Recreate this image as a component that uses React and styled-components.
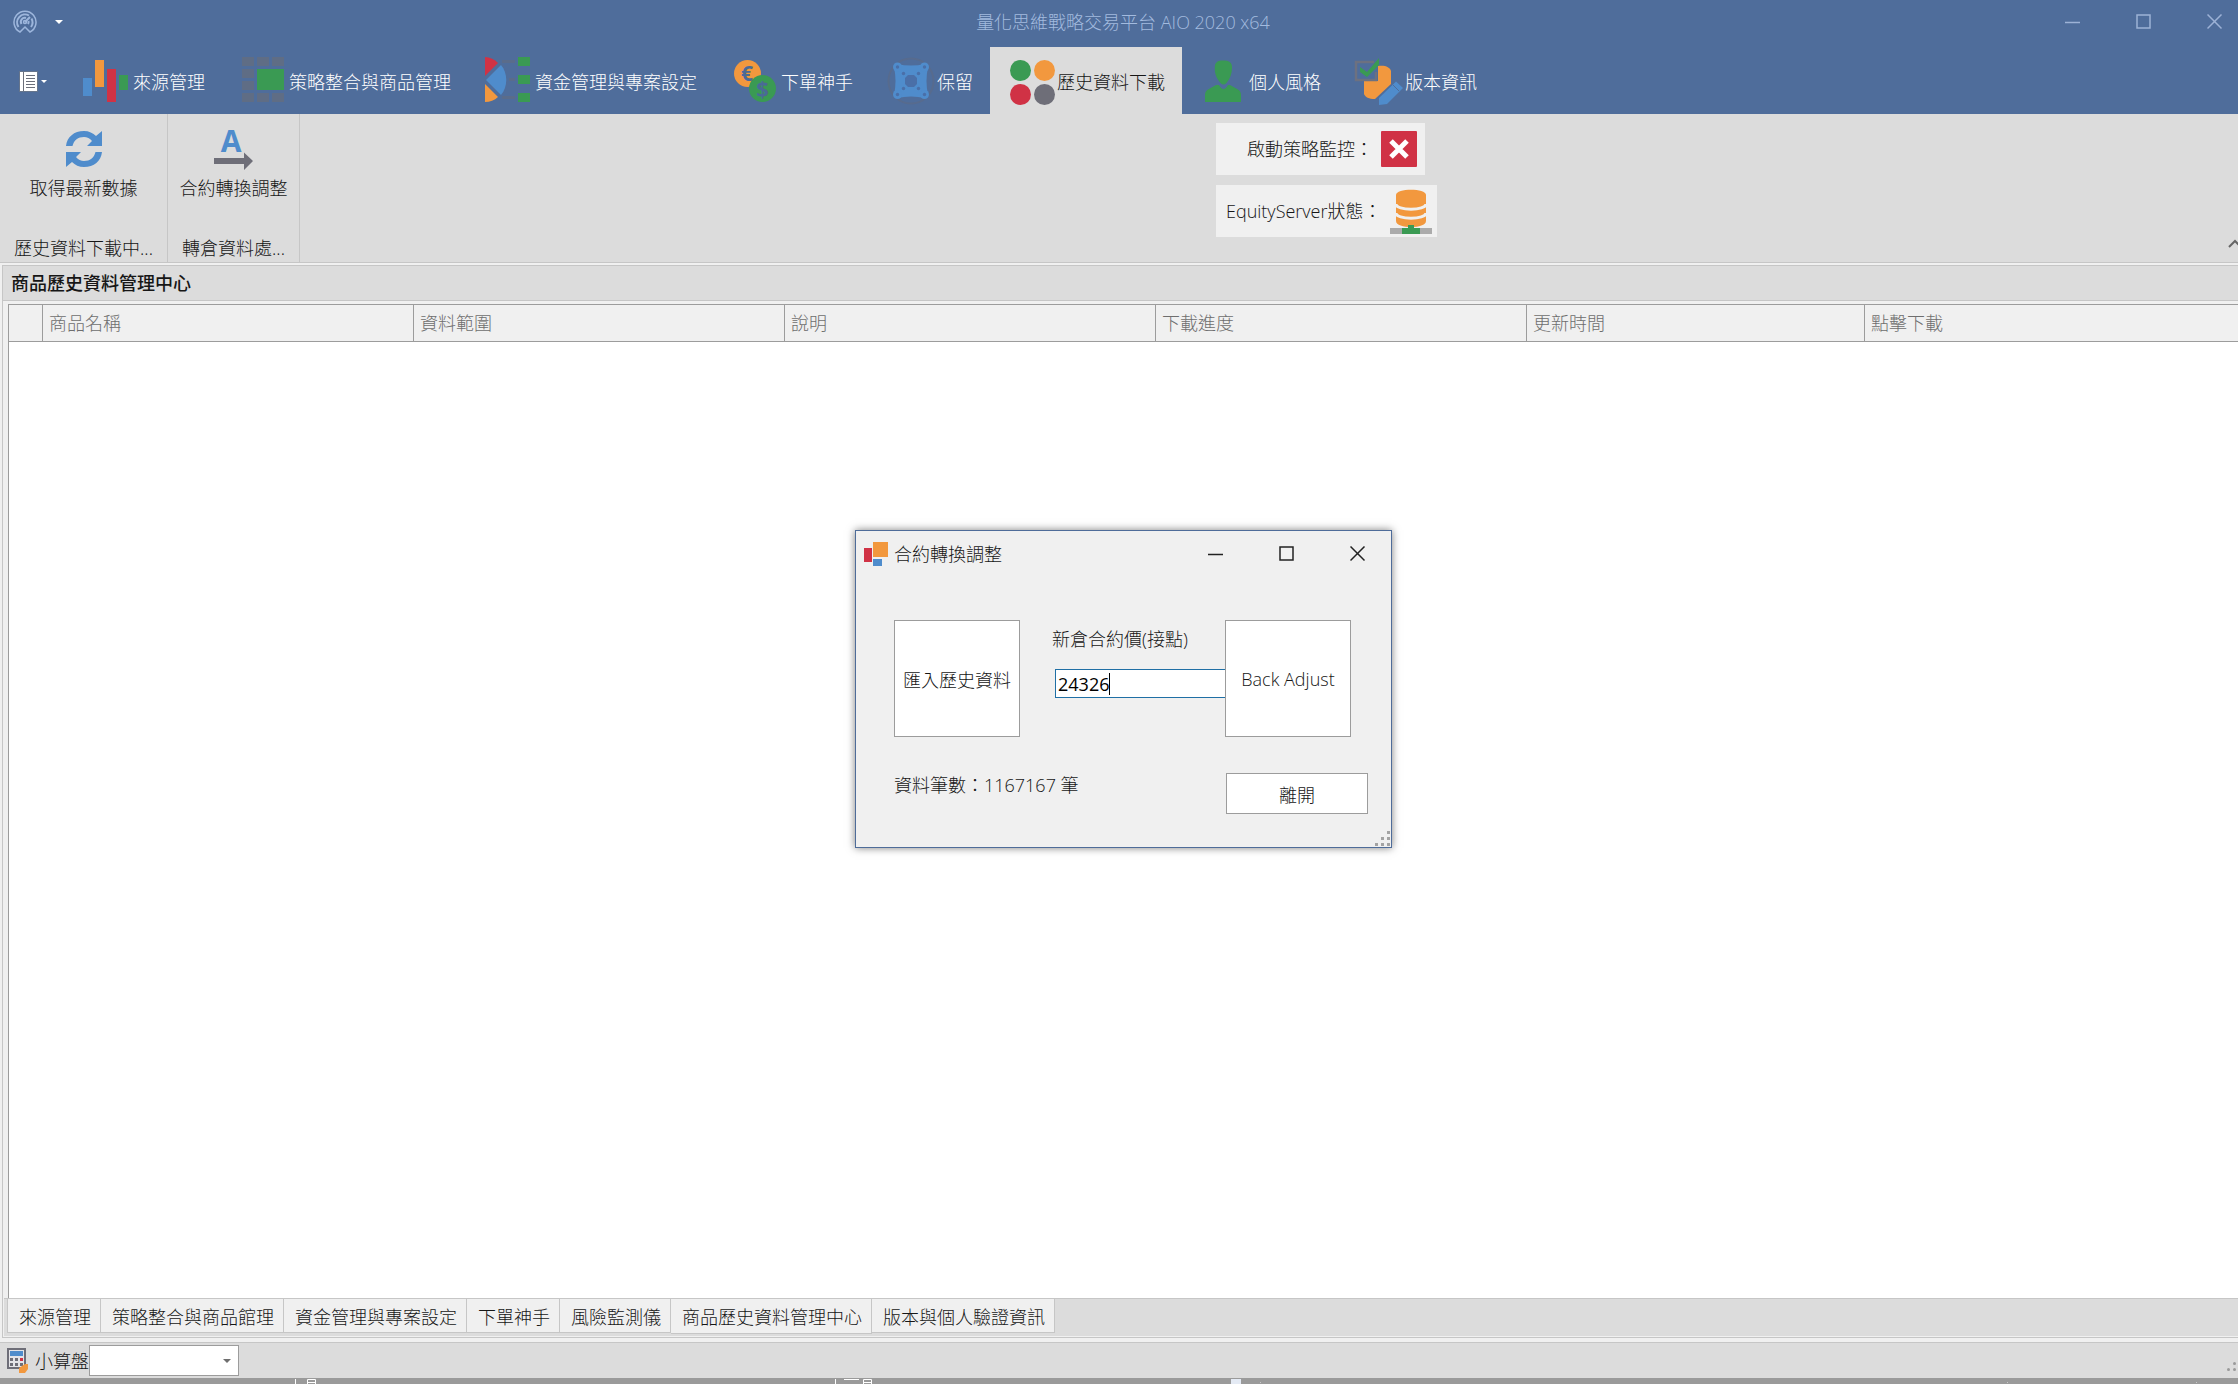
import React, { useState } from "react";

import styled, { createGlobalStyle } from "styled-components";

const BLUE = "#4f8ccc";
const ORANGE = "#f2983e";
const RED = "#d03245";
const GREEN = "#3a9a53";
const GRAY = "#6e6e78";

const SourceIcon = () => (
    <Icon viewBox="0 0 48 48">
        <rect x="1" y="21" width="9" height="18" fill={BLUE} />
        <rect x="13" y="3" width="9" height="27" fill={ORANGE} />
        <rect x="25" y="12" width="9" height="33" fill={RED} />
        <rect x="37" y="18" width="9" height="15" fill={GREEN} />
    </Icon>
);

const StrategyIcon = () => (
    <Icon viewBox="0 0 48 48">
        <path
            fill="#5f6d85"
            d="M4 0h12v9H4zM19 0h12v9H19zM34 0h12v9H34zM4 12h12v9H4zM4 24h12v9H4zM4 36h12v9H4zM19 36h12v9H19zM34 36h12v9H34z"
        />
        <rect x="19" y="12" width="27" height="21" fill={GREEN} />
    </Icon>
);

const FundIcon = () => (
    <Icon viewBox="0 0 48 48">
        <path fill={RED} d="M1 0C6 0 10.500 2.500 14 6L1 19z" />
        <path fill={BLUE} d="M2 23L17 8C24 16 24 30 17 38z" />
        <path fill={ORANGE} d="M1 27L14 40C10.500 43.500 6 45 1 45z" />
        <path
            fill="#5a6c8b"
            d="M18 3h13v3H18zM25 21h6v3H25zM18 39h13v3H18z"
        />
        <path fill={GREEN} d="M34 0h12v9H34zM34 18h12v9H34zM34 36h12v9H34z" />
    </Icon>
);

const OrderIcon = () => (
    <Icon viewBox="0 0 48 48">
        <circle cx="17.5" cy="16.5" r="13.5" fill={ORANGE} />
        <circle cx="32.5" cy="31.5" r="13.5" fill={GREEN} />
        <CoinText x="17" y="24" fontSize="21">
            €
        </CoinText>
        <CoinText x="32.5" y="39.500" fontSize="22">
            $
        </CoinText>
    </Icon>
);

const ReserveIcon = () => (
    <Icon viewBox="0 0 48 48">
        <circle cx="25" cy="24" r="22.5" fill="none" stroke="#576b8e" strokeWidth="2" />
        <g fill={BLUE}>
            <path d="M11 7Q25 10 39 7L42 10Q39 24 42 38L39 41Q25 38 11 41L8 38Q11 24 8 10z" />
            <circle cx="11.500" cy="10" r="4.500" />
            <circle cx="38.500" cy="10" r="4.500" />
            <circle cx="11.500" cy="37.500" r="4.500" />
            <circle cx="38.500" cy="37.500" r="4.500" />
        </g>
        <g fill="#4a6fa8">
            <circle cx="11.500" cy="10" r="1.700" />
            <circle cx="38.500" cy="10" r="1.700" />
            <circle cx="11.500" cy="37.500" r="1.700" />
            <circle cx="38.500" cy="37.500" r="1.700" />
            <circle cx="17.500" cy="16.500" r="1.700" />
            <circle cx="32.500" cy="16.500" r="1.700" />
            <circle cx="17.500" cy="31.500" r="1.700" />
            <circle cx="32.500" cy="31.500" r="1.700" />
            <path d="M22 18h6l3 3v6l-3 3h-6l-3-3v-6z" />
        </g>
    </Icon>
);

const HistoryIcon = () => (
    <Icon viewBox="0 0 48 48">
        <circle cx="14.500" cy="13.500" r="10.500" fill={GREEN} />
        <circle cx="38.500" cy="13.500" r="10.500" fill={ORANGE} />
        <circle cx="14.500" cy="37.500" r="10.500" fill={RED} />
        <circle cx="38.500" cy="37.500" r="10.500" fill={GRAY} />
    </Icon>
);

const PersonIcon = () => (
    <Icon viewBox="0 0 48 48">
        <g fill={GREEN}>
            <path d="M17 8C18 4 22 3 26 3.500C32 3 34.500 7 34 11C34 16 32 22 28.500 26Q25.500 29 22.500 26C18 21 16 15 17 8z" />
            <path d="M18 28L21 28Q25.500 36 30 28L32 28L40 32.500Q43 34 43 38V45H7V38Q7 34 10 32.500z" />
        </g>
    </Icon>
);

const VersionIcon = () => (
    <Icon viewBox="0 0 48 48">
        <path fill={ORANGE} d="M24 9C31 8 36 10 37 14V27L21 42C15 42 11 40 10 37V24H24z" />
        <path fill="none" stroke="#6d7180" strokeWidth="2.500" d="M20 5H2V23H22V15" />
        <path fill={GREEN} d="M6 10L13 15L25 1V8L13 20L6 15z" />
        <path fill={BLUE} d="M25 41L42 24.500L49 31L33 47L25 48z" />
        <path fill="none" stroke="#4f6d9b" d="M39 28L45 34" />
    </Icon>
);

const RefreshIcon = () => (
    <RibbonIcon viewBox="0 0 40 40">
        <g fill={BLUE}>
            <path d="M2 17C3 8 10 2 20 2C25 2 29 4 32 7L38 2V17H23L28 12C26 9.500 23 8 20 8C14 8 10 11 8.500 17z" />
            <path d="M38 23C37 32 30 38 20 38C15 38 11 36 8 33L2 38V23H17L12 28C14 30.500 17 32 20 32C26 32 30 29 31.500 23z" />
        </g>
    </RibbonIcon>
);

const ConvertIcon = () => (
    <RibbonIcon viewBox="0 0 40 40">
        <LetterA x="17" y="23">
            A
        </LetterA>
        <path fill={GRAY} d="M0 29H30V23.500L39 32L30 41V35H0z" />
    </RibbonIcon>
);

const RibbonTabs = [
    { name: "來源管理", icon: SourceIcon },
    { name: "策略整合與商品管理", icon: StrategyIcon },
    { name: "資金管理與專案設定", icon: FundIcon },
    { name: "下單神手", icon: OrderIcon },
    { name: "保留", icon: ReserveIcon },
    { name: "歷史資料下載", icon: HistoryIcon },
    { name: "個人風格", icon: PersonIcon },
    { name: "版本資訊", icon: VersionIcon },
];

const Columns = [
    { name: "", width: "34px" },
    { name: "商品名稱", width: "371px" },
    { name: "資料範圍", width: "371px" },
    { name: "說明", width: "371px" },
    { name: "下載進度", width: "371px" },
    { name: "更新時間", width: "338px" },
    { name: "點擊下載", width: "auto" },
];

const PageTabs = [
    "來源管理",
    "策略整合與商品館理",
    "資金管理與專案設定",
    "下單神手",
    "風險監測儀",
    "商品歷史資料管理中心",
    "版本與個人驗證資訊",
];

const WindowButtons = ({ color, overhang }) => (
    <Controls $overhang={overhang}>
        <ControlButton aria-label="最小化" $color={color}>
            <svg width="16" height="16">
                <path d="M0 8.500H15" />
            </svg>
        </ControlButton>
        <ControlButton aria-label="最大化" $color={color}>
            <svg width="16" height="16">
                <path d="M1 1H14V14H1z" />
            </svg>
        </ControlButton>
        <ControlButton aria-label="關閉" $color={color}>
            <svg width="16" height="16">
                <path d="M0.500 0.500L14.500 14.500M14.500 0.500L0.500 14.500" />
            </svg>
        </ControlButton>
    </Controls>
);

const ConvertDialog = () => {
    const [price, setPrice] = useState("24326");

    return (
        <Dialog role="dialog" aria-label="合約轉換調整">
            <DialogTitle>
                <svg width="24" height="24">
                    <rect x="0" y="6" width="8" height="14" fill={RED} />
                    <rect x="9" y="0" width="15" height="15" fill={ORANGE} />
                    <rect x="9" y="17" width="9" height="7" fill={BLUE} />
                </svg>
                <span>合約轉換調整</span>
                <WindowButtons color="#222" overhang="2px" />
            </DialogTitle>
            <DialogRow>
                <SquareButton>匯入歷史資料</SquareButton>
                <Field>
                    <label htmlFor="price">新倉合約價(接點)</label>
                    <PriceBox>
                        <PriceInput
                            id="price"
                            value={price}
                            size="5"
                            onChange={(e) => setPrice(e.target.value)}
                        />
                        <Caret />
                    </PriceBox>
                </Field>
                <SquareButton>Back Adjust</SquareButton>
            </DialogRow>
            <DialogFooter>
                <Count>資料筆數：1167167 筆</Count>
                <ExitButton>離開</ExitButton>
            </DialogFooter>
            <DialogGrip width="16" height="16">
                <path
                    fill="#a3a3a3"
                    d="M12 0h3v3h-3zM6 6h3v3H6zM12 6h3v3h-3zM0 12h3v3H0zM6 12h3v3H6zM12 12h3v3h-3z"
                />
            </DialogGrip>
        </Dialog>
    );
};

const App = () => {
    return (
        <Page>
            <GlobalStyle />
            <Header>
                <TitleBar>
                    <QuickAccess>
                        <svg width="24" height="24" viewBox="0 0 24 24" fill="none" stroke="#9db6dc" strokeWidth="1.500">
                            <path d="M7 22A11 11 0 1 1 17 22L12 17z" />
                            <path d="M5.500 17A8 8 0 0 1 16 5.500M18.500 8.500A8 8 0 0 1 18 17" strokeWidth="2" />
                            <path d="M8.500 14A4 4 0 0 1 13 8M12 12L17 7M15.500 11A4 4 0 0 1 15 14" strokeWidth="2" />
                            <circle cx="12" cy="12" r="1.500" />
                        </svg>
                        <DownArrow $color="#fff" />
                    </QuickAccess>
                    <AppTitle>量化思維戰略交易平台 AIO 2020 x64</AppTitle>
                    <WindowButtons color="#9db2d6" overhang="12px" />
                </TitleBar>
                <TabBar>
                    <FileButton aria-label="檔案">
                        <svg width="28" height="22">
                            <rect x="0" y="0" width="19" height="21" fill="#66758c" />
                            <rect x="1" y="1" width="17" height="19" fill="#fff" />
                            <path stroke="#6b6f7a" strokeWidth="1" d="M4.500 1v19" />
                            <path stroke="#6b6f7a" strokeWidth="1" d="M7 4.500h9M7 7.500h9M7 10.500h9M7 13.500h9M7 16.500h9" />
                            <path fill="#fff" d="M22 9h6l-3 3z" />
                        </svg>
                    </FileButton>
                    {RibbonTabs.map((tab) => (
                        <RibbonTab key={tab.name} $active={tab.name === "歷史資料下載"}>
                            <tab.icon />
                            {tab.name}
                        </RibbonTab>
                    ))}
                </TabBar>
            </Header>
            <Ribbon>
                <RibbonGroup $width="168px">
                    <RibbonButton>
                        <RefreshIcon />
                        取得最新數據
                    </RibbonButton>
                    <GroupName>歷史資料下載中...</GroupName>
                </RibbonGroup>
                <RibbonGroup $width="132px">
                    <RibbonButton>
                        <ConvertIcon />
                        合約轉換調整
                    </RibbonButton>
                    <GroupName>轉倉資料處...</GroupName>
                </RibbonGroup>
                <StatusList>
                    <StatusItem $left="31px" $right="8px">
                        啟動策略監控：
                        <svg width="36" height="36">
                            <rect width="36" height="36" rx="1" fill={RED} />
                            <path stroke="#fff" strokeWidth="5" d="M10 10L26 26M26 10L10 26" />
                        </svg>
                    </StatusItem>
                    <StatusItem $left="10px" $right="5px">
                        EquityServer狀態：
                        <svg width="42" height="48">
                            <path fill={ORANGE} d="M6 8C6 1 36 1 36 8V34C36 42 6 42 6 34z" />
                            <path fill="none" stroke="#f0f0f0" strokeWidth="3" d="M6 17C6 24 36 24 36 17M6 26C6 33 36 33 36 26" />
                            <path fill="#ababab" d="M0 41h12v6H0zM30 41h12v6H30z" />
                            <path fill={GREEN} d="M18 38h6v3h6v6H12v-6h6z" />
                        </svg>
                    </StatusItem>
                </StatusList>
                <Collapse aria-label="收合功能區">
                    <svg width="14" height="9">
                        <path fill="none" stroke="#666" strokeWidth="2" d="M1 8L7 2L13 8" />
                    </svg>
                </Collapse>
            </Ribbon>
            <Workspace>
                <PanelTitle>商品歷史資料管理中心</PanelTitle>
                <GridArea>
                    <Table>
                        <thead>
                            <tr>
                                {Columns.map((column, i) => (
                                    <ColumnHead key={i} $width={column.width}>
                                        {column.name}
                                    </ColumnHead>
                                ))}
                            </tr>
                        </thead>
                    </Table>
                </GridArea>
                <PageTabBar>
                    {PageTabs.map((name) => (
                        <PageTab key={name} $active={name === "商品歷史資料管理中心"}>
                            {name}
                        </PageTab>
                    ))}
                </PageTabBar>
            </Workspace>
            <StatusBar>
                <svg width="22" height="26">
                    <rect x="1" y="1" width="17" height="19" fill="#e4e4e8" stroke="#6e6e78" strokeWidth="2" />
                    <rect x="3" y="3" width="13" height="5" fill={BLUE} />
                    <path fill="#6e6e78" d="M3 10h3v3H3zM8 10h3v3H8zM3 15h3v3H3zM8 15h3v3H8zM13 15h3v3h-3z" />
                    <rect x="13" y="10" width="3" height="3" fill={RED} />
                    <path fill={ORANGE} d="M12 20L18 16H21V21L18 25H12z" />
                </svg>
                <label htmlFor="abacus">小算盤</label>
                <ComboWrap>
                    <Combo id="abacus" />
                    <DownArrow $color="#6e6e6e" />
                </ComboWrap>
                <Grip width="9" height="9">
                    <circle cx="7.500" cy="1.500" r="1.500" />
                    <circle cx="1.500" cy="7.500" r="1.500" />
                    <circle cx="7.500" cy="7.500" r="1.500" />
                </Grip>
            </StatusBar>
            <Taskbar>
                <svg width="2238" height="6">
                    <path fill="none" stroke="#fff" d="M295.500 1v5M307.500 6v-4.500h8v4.500M307 4.500h9M835.500 1v5M844 1.500h15M863.500 6v-4.500h8v4.500M863 4.500h9" />
                    <rect x="1231" y="1" width="10" height="5" fill="#e4eaf4" />
                    <path fill="#c9c9c9" d="M1260 4h1v1h-1zM2007 4h1v1h-1zM2196 4h1v1h-1z" />
                </svg>
            </Taskbar>
            <ConvertDialog />
        </Page>
    );
};

const GlobalStyle = createGlobalStyle`
    * {
        box-sizing: border-box;
    }
    body {
        margin: 0;
    }
    body, button, input, select {
        color: #161616;
        font-family: "Open Sans", "Noto Sans CJK TC", sans-serif;
        font-size: 18px;
        font-weight: 300;
    }
    button {
        background: none;
        border: 0;
        margin: 0;
        padding: 0;
    }
    svg {
        display: block;
        flex: none;
    }
`;
const Page = styled.div`
    background-color: #f0f0f0;
    display: flex;
    flex-direction: column;
    height: 100vh;
    line-height: 26px;
    overflow: hidden;
    white-space: nowrap;
`;
const Header = styled.header`
    background-color: #4f6d9b;
`;
const TitleBar = styled.div`
    align-items: center;
    display: grid;
    grid-template-columns: 1fr auto 1fr;
    height: 47px;
    padding-bottom: 3px;
`;
const QuickAccess = styled.div`
    align-items: center;
    display: flex;
    gap: 18px;
    padding-left: 13px;
`;
const DownArrow = styled.span`
    border: 4px solid transparent;
    border-bottom: 0;
    border-top-color: ${(props) => props.$color};
`;
const AppTitle = styled.div`
    color: #a3bbdf;
    padding-left: 8px;
`;
const Controls = styled.div`
    display: flex;
    margin-left: auto;
    margin-right: -${(props) => props.$overhang};
`;
const ControlButton = styled.button`
    display: grid;
    height: 44px;
    place-items: center;
    width: 71px;
    path {
        fill: none;
        stroke: ${(props) => props.$color};
        stroke-width: 1.5;
    }
`;
const TabBar = styled.nav`
    display: flex;
    height: 67px;
`;
const FileButton = styled.button`
    padding: 2px 19px 0;
    width: 66px;
`;
const Icon = styled.svg`
    height: 48px;
    margin-right: 3px;
    overflow: visible;
    width: 48px;
`;
const CoinText = styled.text`
    fill: #4a6a96;
    font-family: "Open Sans", sans-serif;
    font-weight: 700;
    text-anchor: middle;
`;
const RibbonTab = styled.button`
    align-items: center;
    background-color: ${(props) => (props.$active ? "#dcdcdc" : "transparent")};
    color: ${(props) => (props.$active ? "#161616" : "#fff")};
    display: flex;
    padding: 0 17px 0 16px;
`;
const Ribbon = styled.section`
    background-color: #dcdcdc;
    border-bottom: 1px solid #c6c6c6;
    display: flex;
    height: 149px;
`;
const RibbonGroup = styled.div`
    align-items: center;
    border-right: 1px solid #c6c6c6;
    display: flex;
    flex-direction: column;
    justify-content: space-between;
    padding: 15px 0 1px;
    width: ${(props) => props.$width};
`;
const RibbonButton = styled.button`
    align-items: center;
    display: flex;
    flex-direction: column;
    gap: 6px;
    line-height: 26px;
`;
const RibbonIcon = styled.svg`
    height: 40px;
    overflow: visible;
    width: 40px;
`;
const LetterA = styled.text`
    fill: ${BLUE};
    font-family: "Open Sans", sans-serif;
    font-size: 30px;
    font-weight: 700;
    text-anchor: middle;
`;
const GroupName = styled.div``;
const StatusList = styled.div`
    align-items: flex-start;
    display: flex;
    flex-direction: column;
    gap: 10px;
    padding: 9px 0 0 916px;
`;
const StatusItem = styled.div`
    align-items: center;
    background-color: #f0f0f0;
    display: flex;
    gap: 8px;
    height: 52px;
    padding: 0 ${(props) => props.$right} 0 ${(props) => props.$left};
`;
const Collapse = styled.button`
    align-self: flex-end;
    margin: 0 -4px 14px auto;
`;
const Workspace = styled.main`
    border: 1px solid #c6c6c6;
    border-right: 0;
    display: flex;
    flex: 1;
    flex-direction: column;
    margin: 2px 0 4px 2px;
`;
const PanelTitle = styled.div`
    align-items: center;
    background-color: #dcdcdc;
    border-bottom: 1px solid #c6c6c6;
    display: flex;
    font-weight: 500;
    height: 35px;
    padding-left: 8px;
`;
const GridArea = styled.div`
    background-color: #fff;
    border-left: 1px solid #9c9c9c;
    border-top: 1px solid #9c9c9c;
    flex: 1;
    margin: 3px 0 0 5px;
`;
const Table = styled.table`
    border-collapse: separate;
    border-spacing: 0;
    table-layout: fixed;
    width: 100%;
`;
const ColumnHead = styled.th`
    background-color: #f0f0f0;
    border-bottom: 1px solid #9c9c9c;
    border-right: 1px solid #9c9c9c;
    color: #6e6e6e;
    font-weight: 300;
    height: 37px;
    padding: 0 6px;
    text-align: left;
    width: ${(props) => props.$width};
    &:last-child {
        border-right: 0;
    }
`;
const PageTabBar = styled.div`
    align-items: flex-start;
    background-color: #dcdcdc;
    border-bottom: 1px solid #f0f0f0;
    border-top: 1px solid #c6c6c6;
    display: flex;
    height: 39px;
    margin-left: 1px;
    padding-left: 3px;
`;
const PageTab = styled.button`
    background-color: #f0f0f0;
    border: 1px solid #c6c6c6;
    border-left-width: 0;
    border-top: 0;
    height: ${(props) => (props.$active ? "35px" : "34px")};
    padding: 0 9px 0 11px;
    &:first-child {
        border-left-width: 1px;
    }
`;
const StatusBar = styled.footer`
    align-items: center;
    background-color: #dcdcdc;
    border-top: 1px solid #c6c6c6;
    display: flex;
    height: 36px;
    padding: 0 2px 0 7px;
    label {
        padding-left: 6px;
    }
`;
const ComboWrap = styled.div`
    align-items: center;
    display: flex;
    span {
        margin-left: -16px;
        pointer-events: none;
    }
`;
const Combo = styled.select`
    appearance: none;
    background-color: #fff;
    border: 1px solid #9c9c9c;
    border-radius: 0;
    height: 31px;
    width: 150px;
`;
const Grip = styled.svg`
    fill: #9a9a9a;
    margin-left: auto;
    margin-top: 12px;
`;
const Taskbar = styled.div`
    background-color: #9a9a9a;
    height: 6px;
    overflow: hidden;
`;
const Dialog = styled.div`
    background-color: #f0f0f0;
    border: 1px solid #4e6c99;
    box-shadow: 0 0 8px rgba(0, 0, 0, 0.5);
    height: 318px;
    left: 855px;
    position: absolute;
    top: 530px;
    width: 537px;
`;
const DialogTitle = styled.div`
    align-items: center;
    display: flex;
    gap: 6px;
    height: 45px;
    padding-left: 8px;
`;
const DialogRow = styled.div`
    display: flex;
    margin-top: 44px;
    padding-left: 38px;
`;
const SquareButton = styled.button`
    background-color: #fff;
    border: 1px solid #9c9c9c;
    height: 117px;
    width: 126px;
`;
const Field = styled.div`
    padding: 6px 0 0 32px;
    width: 205px;
    label {
        display: block;
    }
`;
const PriceBox = styled.div`
    align-items: center;
    background-color: #fff;
    border: 1px solid #1f6fa5;
    border-right: 0;
    display: flex;
    height: 29px;
    margin: 17px 0 0 3px;
    padding-left: 2px;
`;
const PriceInput = styled.input`
    background: none;
    border: 0;
    color: #000;
    field-sizing: content;
    font-weight: 400;
    outline: 0;
    padding: 0;
`;
const Caret = styled.span`
    background-color: #000;
    height: 22px;
    width: 1px;
`;
const DialogFooter = styled.div`
    display: flex;
    justify-content: space-between;
    padding: 36px 23px 0 38px;
`;
const Count = styled.div`
    line-height: 24px;
`;
const ExitButton = styled.button`
    background-color: #fff;
    border: 1px solid #9c9c9c;
    height: 41px;
    width: 142px;
`;
const DialogGrip = styled.svg`
    bottom: 0;
    position: absolute;
    right: 0;
`;

export default App;
